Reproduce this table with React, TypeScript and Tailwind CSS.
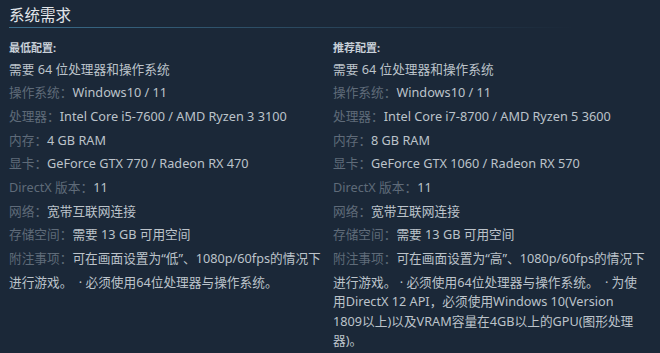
import React from "react";

type Row = { label?: string; value: string };

const font = {
  fontFamily: '"Noto Sans", "Noto Sans CJK SC", sans-serif',
};

function Column({
  heading,
  rows,
  noteLines,
}: {
  heading: string;
  rows: Row[];
  noteLines: string[];
}) {
  return (
    <div className="flex w-[313px] flex-col">
      <div className="mt-[12px] h-[16px] text-[11px] leading-[16px] font-bold text-[#c8d0d8]">
        {heading}
      </div>
      <ul className="mt-[3.5px] flex flex-col gap-[4.2px] text-[12.7px] leading-[19.5px]">
        {rows.map((r, i) => (
          <li key={i} className="whitespace-nowrap text-[#bcc3ca]">
            {r.label && <span className="text-[#5f6b79]">{r.label}：</span>}
            {r.value}
          </li>
        ))}
        <li className="text-[#bcc3ca]">
          <div className="whitespace-nowrap">
            <span className="text-[#5f6b79]">附注事项：</span>
            {noteLines[0]}
          </div>
          <div className="mt-[4px] flex flex-col">
            {noteLines.slice(1).map((l, i) => (
              <div key={i} className="whitespace-nowrap">
                {l}
              </div>
            ))}
          </div>
        </li>
      </ul>
    </div>
  );
}

export default function App() {
  return (
    <div
      className="h-[353px] w-[660px] overflow-hidden bg-[#1b2838] px-[9px]"
      style={font}
    >
      <div className="pt-[4px]">
        <div className="h-[23px] text-[15.5px] leading-[23px] text-[#e2e6ea]">
          系统需求
        </div>
        <div className="h-px w-[565px] bg-gradient-to-r from-[#3b6e8c] to-[#1b2838]" />
      </div>
      <div className="flex gap-[11px]">
        <Column
          heading="最低配置:"
          rows={[
            { value: "需要 64 位处理器和操作系统" },
            { label: "操作系统", value: "Windows10 / 11" },
            { label: "处理器", value: "Intel Core i5-7600 / AMD Ryzen 3 3100" },
            { label: "内存", value: "4 GB RAM" },
            { label: "显卡", value: "GeForce GTX 770 / Radeon RX 470" },
            { label: "DirectX 版本", value: "11" },
            { label: "网络", value: "宽带互联网连接" },
            { label: "存储空间", value: "需要 13 GB 可用空间" },
          ]}
          noteLines={[
            "可在画面设置为“低”、1080p/60fps的情况下",
            "进行游戏。　· 必须使用64位处理器与操作系统。",
          ]}
        />
        <Column
          heading="推荐配置:"
          rows={[
            { value: "需要 64 位处理器和操作系统" },
            { label: "操作系统", value: "Windows10 / 11" },
            { label: "处理器", value: "Intel Core i7-8700 / AMD Ryzen 5 3600" },
            { label: "内存", value: "8 GB RAM" },
            { label: "显卡", value: "GeForce GTX 1060 / Radeon RX 570" },
            { label: "DirectX 版本", value: "11" },
            { label: "网络", value: "宽带互联网连接" },
            { label: "存储空间", value: "需要 13 GB 可用空间" },
          ]}
          noteLines={[
            "可在画面设置为“高”、1080p/60fps的情况下",
            "进行游戏。 · 必须使用64位处理器与操作系统。　· 为使",
            "用DirectX 12 API，必须使用Windows 10(Version",
            "1809以上)以及VRAM容量在4GB以上的GPU(图形处理",
            "器)。",
          ]}
        />
      </div>
    </div>
  );
}
